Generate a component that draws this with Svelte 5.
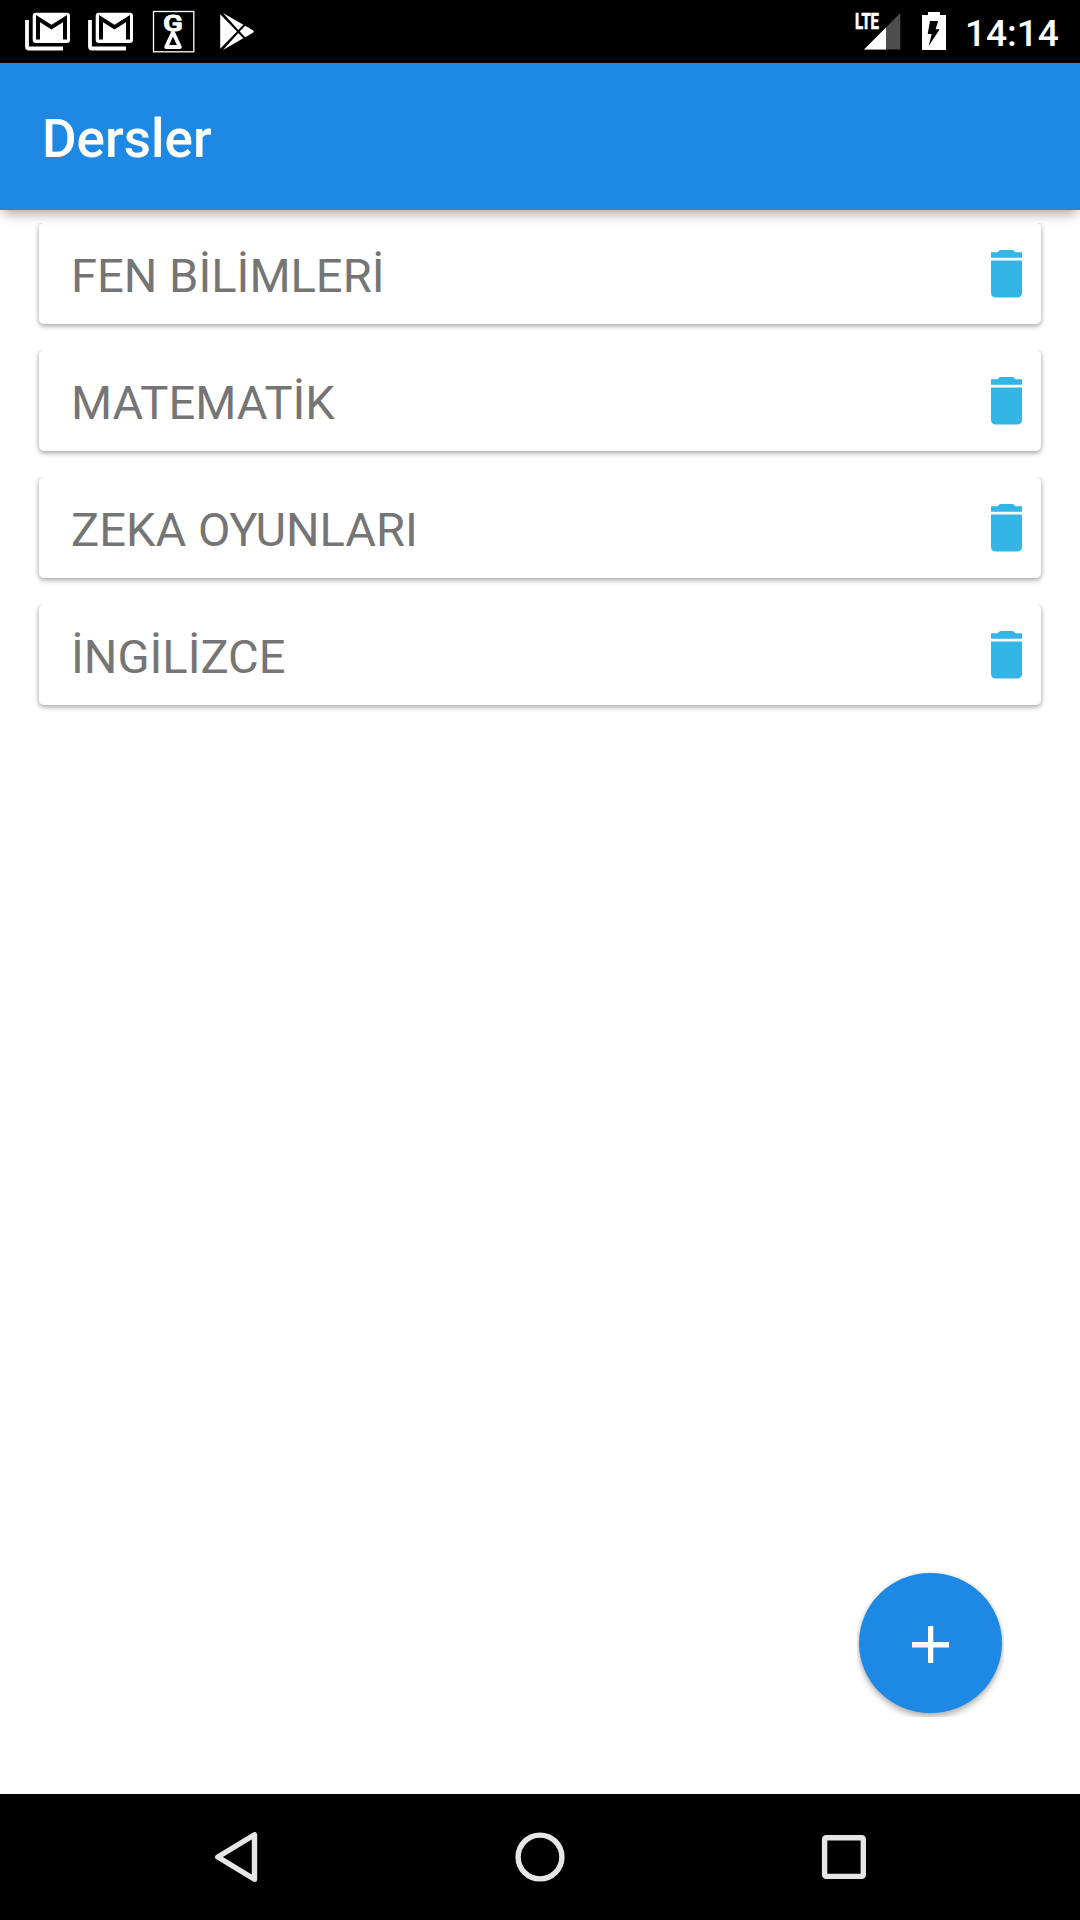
<!--
  Dersler — lesson list screen.

  * Status bar, app bar, lesson cards, add button, navigation bar.
  * Each card carries a delete action on its right edge.
-->
<script lang="ts">
  interface Lesson {
    id: number;
    name: string;
  }

  const lessons: Lesson[] = [
    { id: 1, name: 'FEN BİLİMLERİ' },
    { id: 2, name: 'MATEMATİK' },
    { id: 3, name: 'ZEKA OYUNLARI' },
    { id: 4, name: 'İNGİLİZCE' },
  ];
</script>

{#snippet mail()}
  <svg class="notif" width="63" height="63" viewBox="0 0 63 63" aria-hidden="true">
    <path d="M27 20v26.5q0 2 2 2h34" fill="none" stroke="#fff" stroke-width="3.8" />
    <rect x="32.7" y="12.8" width="37.3" height="30.2" rx="3.2" fill="#fff" />
    <path d="M38 39.5V18.6l13.5 8.6L65 18.6v20.9" fill="none" stroke="#000" stroke-width="4" />
  </svg>
{/snippet}

<div class="screen" lang="tr">
  <div class="status">
    <div class="notifs">
      {@render mail()}
      {@render mail()}
      <svg class="notif" width="63" height="63" viewBox="126 0 63 63" aria-hidden="true">
        <rect x="153.5" y="11.5" width="40.3" height="40.3" fill="none" stroke="#fff" stroke-width="1.3" />
        <text class="logo-g" x="163.3" y="30.6" textLength="19.5" lengthAdjust="spacingAndGlyphs">G</text>
        <path d="M173 32.2l-6.900 14.800h13.800z" fill="none" stroke="#fff" stroke-width="3.800" stroke-linejoin="round" />
      </svg>
      <svg class="notif" width="63" height="63" viewBox="189 0 63 63" aria-hidden="true">
        <g fill="#fff">
          <path d="M220.2 14.3l16.8 17.2-16.8 17.2z" />
          <path d="M223 13l20.3 11.8-5 5.1z" />
          <path d="M223 50l20.3-11.8-5-5.1z" />
          <path d="M245.2 25.8l7.8 4.4q1.8 1.3 0 2.6l-7.8 4.4-5.5-5.7z" />
        </g>
      </svg>
    </div>
    <div class="system">
      <svg width="48" height="63" viewBox="855 0 48 63" aria-hidden="true">
        <path d="M864 49.5L900.3 13v36.5z" fill="#4d4d4d" />
        <path d="M864 49.5L886 27.4v22.1z" fill="#fff" />
        <text class="lte" x="855" y="29" textLength="24" lengthAdjust="spacingAndGlyphs">LTE</text>
      </svg>
      <svg class="battery" width="24" height="63" viewBox="922 0 24 63" aria-hidden="true">
        <path d="M922 15h6v-3h12v3h6v35h-24z" fill="#fff" />
        <path d="M930 21h8.2l-2.6 8.3h4.1L928.7 46l3-12h-4z" fill="#000" />
      </svg>
      <span class="clock">14:14</span>
    </div>
  </div>

  <header class="appbar">
    <h1>Dersler</h1>
  </header>

  <main class="content">
    <ul class="lessons">
      {#each lessons as lesson (lesson.id)}
        <li class="card">
          <span class="name">{lesson.name}</span>
          <button class="delete" type="button" aria-label="Sil">
            <svg width="31" height="48" viewBox="0 0 31 48" aria-hidden="true">
              <path d="M0 2.3h6.5L9 0h13l2.5 2.3H31v5.5H0z" />
              <path d="M0 10.4h31v32.1q0 5-5 5H5q-5 0-5-5z" />
            </svg>
          </button>
        </li>
      {/each}
    </ul>

    <div class="fab-wrap">
      <button class="fab" type="button" aria-label="Ekle">
        <svg width="38" height="38" viewBox="0 0 38 38" aria-hidden="true">
          <path d="M16 0h5.3v16H37v5.5H21.3V37H16V21.5H0V16h16z" />
        </svg>
      </button>
    </div>
  </main>

  <nav class="navbar">
    <svg width="44" height="52" viewBox="214 1831 44 52" aria-hidden="true">
      <path d="M254.5 1834.8v44.4L217.8 1857z" stroke-linejoin="round" />
    </svg>
    <svg width="52" height="52" viewBox="514 1831 52 52" aria-hidden="true">
      <circle cx="540" cy="1857" r="21.9" />
    </svg>
    <svg width="46" height="52" viewBox="821 1831 46 52" aria-hidden="true">
      <rect x="824.6" y="1837.7" width="38.7" height="38.7" rx="1.5" />
    </svg>
  </nav>
</div>

<style>
  :global(body) {
    margin: 0;
  }
  .screen {
    display: flex;
    flex-direction: column;
    width: 1080px;
    height: 1920px;
    background: #fff;
    font-family: Roboto, sans-serif;
    overflow: hidden;
  }

  /* Status bar */
  .status {
    display: flex;
    justify-content: space-between;
    flex: none;
    height: 63px;
    background: #000;
    color: #fff;
  }
  .notifs,
  .system {
    display: flex;
  }
  .notif {
    overflow: visible;
  }
  .system {
    align-items: center;
    padding-right: 21px;
  }
  .battery {
    margin: 0 19px;
  }
  .clock {
    width: 94px;
    font-size: 37px;
    font-weight: 500;
    line-height: 63px;
    padding-top: 4px;
  }
  .lte {
    fill: #fff;
    stroke: #fff;
    stroke-width: 0.7px;
    font-size: 21.5px;
    font-weight: 700;
  }
  .logo-g {
    fill: #fff;
    stroke: #fff;
    stroke-width: 1.2px;
    stroke-linejoin: round;
    font-size: 22.5px;
    font-weight: 500;
  }

  /* App bar */
  .appbar {
    display: flex;
    align-items: center;
    flex: none;
    height: 147px;
    padding: 0 42px;
    background: #1e88e5;
    box-shadow: 0 7px 11px -3px rgba(0, 0, 0, 0.34);
    z-index: 1;
  }
  h1 {
    margin: 0;
    padding-top: 4px;
    color: #fff;
    font-size: 53px;
    font-weight: 500;
  }

  /* Lessons */
  .content {
    position: relative;
    flex: 1;
  }
  .lessons {
    display: flex;
    flex-direction: column;
    gap: 26px;
    margin: 0;
    padding: 13px 39px;
    list-style: none;
  }
  .card {
    display: flex;
    align-items: center;
    justify-content: space-between;
    box-sizing: border-box;
    height: 101px;
    padding: 0 19px 0 32px;
    border-radius: 5px;
    background: #fff;
    box-shadow:
      0 3px 5px rgba(0, 0, 0, 0.22),
      0 0 5px rgba(0, 0, 0, 0.22);
    clip-path: inset(0 -12px -16px -12px);
  }
  .name {
    padding-top: 3px;
    color: #757575;
    font-size: 47.1px;
  }
  .delete {
    display: flex;
    padding: 0;
    border: 0;
    background: none;
    fill: #33b5e5;
    cursor: pointer;
  }

  /* Floating add button */
  .fab-wrap {
    position: absolute;
    right: 76px;
    bottom: 77px;
    padding: 2px 2px 4px;
    overflow: hidden;
  }
  .fab {
    display: flex;
    align-items: center;
    justify-content: center;
    width: 143px;
    height: 140px;
    padding: 4px 0 0;
    border: 0;
    border-radius: 50%;
    background: #1e88e5;
    box-shadow:
      0 4px 6px rgba(0, 0, 0, 0.28),
      0 0 4px rgba(0, 0, 0, 0.1);
    fill: #fff;
    cursor: pointer;
  }

  /* Navigation bar */
  .navbar {
    display: flex;
    align-items: center;
    justify-content: space-between;
    flex: none;
    box-sizing: border-box;
    height: 126px;
    padding: 0 213px 0 214px;
    background: #000;
  }
  .navbar svg {
    fill: none;
    stroke: #e6e6e6;
    stroke-width: 5.4px;
  }
</style>
